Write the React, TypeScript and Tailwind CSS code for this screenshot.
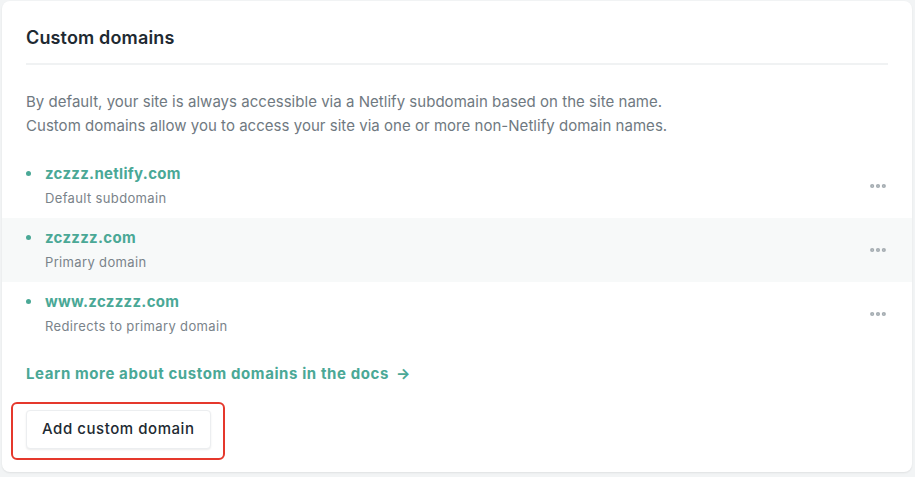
import { MoreHorizontal } from "lucide-react";

const domains = [
  { name: "zczzz.netlify.com", note: "Default subdomain", active: false },
  { name: "zczzzz.com", note: "Primary domain", active: true },
  { name: "www.zczzzz.com", note: "Redirects to primary domain", active: false },
];

export default function App() {
  return (
    <div
      className="min-h-[477px] w-[915px] bg-[#f2f4f5] pt-[1px] pl-[2px] pr-[3px]"
      style={{ fontFamily: "Inter, 'Noto Sans', sans-serif" }}
    >
      <div className="h-[471px] rounded-lg bg-white shadow-[0_1px_2px_rgba(0,0,0,0.08)]">
        <div className="px-6 pt-[23px]">
          <h3 className="text-[18px] font-semibold leading-7 tracking-[0.15px] text-[#1e2a32]">
            Custom domains
          </h3>
          <div className="mt-[11px] h-[2px] bg-[#f0f2f3]" />
          <p className="mt-[25px] text-[15px] leading-6 tracking-[0.03px] text-[#6f7981]">
            By default, your site is always accessible via a Netlify subdomain based on the site name.
            <br />
            Custom domains allow you to access your site via one or more non-Netlify domain names.
          </p>
        </div>

        <ul className="mt-[16px]">
          {domains.map((d) => (
            <li
              key={d.name}
              className={`flex h-16 items-center justify-between px-6 ${d.active ? "bg-[#f7f9f9]" : ""}`}
            >
              <div className="flex items-start gap-[14px]">
                <span className="mt-[9px] h-[5px] w-[5px] rounded-full bg-[#4aa896]" />
                <div>
                  <div className="text-[15px] font-bold leading-6 tracking-[0.3px] text-[#4aa896]">{d.name}</div>
                  <div className="text-[13px] leading-6 tracking-[0.35px] text-[#7a838a]">{d.note}</div>
                </div>
              </div>
              <MoreHorizontal className="text-[#a4acb1]" size={20} strokeWidth={3} />
            </li>
          ))}
        </ul>

        <div className="px-6 pt-[16px]">
          <a className="flex items-center gap-[7px] text-[15px] font-bold leading-6 tracking-[0.6px] text-[#4aa896]">
            Learn more about custom domains in the docs
            <span className="text-[15px]">→</span>
          </a>
          <div className="relative mt-[24px] inline-block">
            <div className="pointer-events-none absolute -left-[15px] -top-[8px] -bottom-[11px] -right-[14px] rounded-md border-2 border-[#e5382c]" />
            <button className="h-[39px] rounded border border-[#eceef0] bg-white px-[15px] text-[15px] font-medium tracking-[0.55px] text-[#1e2a32] shadow-[0_1px_2px_rgba(0,0,0,0.08)]">
              Add custom domain
            </button>
          </div>
        </div>
      </div>
    </div>
  );
}
